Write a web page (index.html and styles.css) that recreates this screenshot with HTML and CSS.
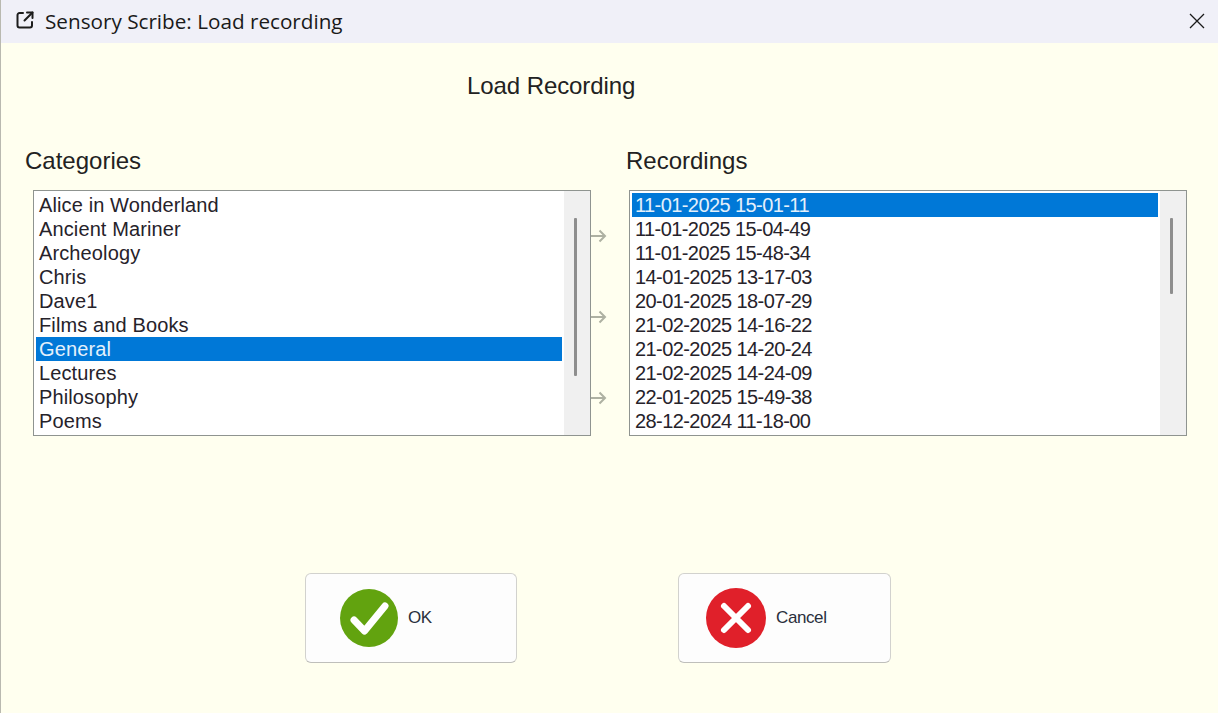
FILE: index.html
```html
<!DOCTYPE html>
<html lang="en">
<head>
<meta charset="utf-8">
<title>Sensory Scribe: Load recording</title>
<link rel="stylesheet" href="styles.css">
</head>
<body>
<div class="window">
  <header class="titlebar">
    <svg class="title-icon" width="18" height="18" viewBox="0 0 18 18" fill="none" stroke="#1c1c1c" stroke-width="2" stroke-linecap="round" stroke-linejoin="round">
      <path d="M7 2H3.500A2 2 0 0 0 1.500 4v10.500a2 2 0 0 0 2 2H14a2 2 0 0 0 2-2V11"/>
      <path d="M11 1.500h5.500V7"/>
      <path d="M16.500 1.500L8.500 9.500"/>
    </svg>
    <span class="title-text">Sensory Scribe: Load recording</span>
    <svg class="close-icon" width="16" height="16" viewBox="0 0 16 16" fill="none" stroke="#1a1a1a" stroke-width="1.300">
      <path d="M1 1L15 15M15 1L1 15"/>
    </svg>
  </header>
  <main class="content">
    <h1 class="heading">Load Recording</h1>
    <div class="labels">
      <div class="label label-left">Categories</div>
      <div class="label">Recordings</div>
    </div>
    <div class="lists">
      <div class="listbox">
        <ul class="items">
          <li>Alice in Wonderland</li>
          <li>Ancient Mariner</li>
          <li>Archeology</li>
          <li>Chris</li>
          <li>Dave1</li>
          <li>Films and Books</li>
          <li class="selected">General</li>
          <li>Lectures</li>
          <li>Philosophy</li>
          <li>Poems</li>
        </ul>
        <div class="track"><div class="thumb thumb-long"></div></div>
      </div>
      <div class="arrows">
        <svg width="16" height="14" viewBox="0 0 16 14" fill="none" stroke="#aeb1a2" stroke-width="2"><path d="M0 7H14M8.500 1.500L14 7L8.500 12.500"/></svg>
        <svg width="16" height="14" viewBox="0 0 16 14" fill="none" stroke="#aeb1a2" stroke-width="2"><path d="M0 7H14M8.500 1.500L14 7L8.500 12.500"/></svg>
        <svg width="16" height="14" viewBox="0 0 16 14" fill="none" stroke="#aeb1a2" stroke-width="2"><path d="M0 7H14M8.500 1.500L14 7L8.500 12.500"/></svg>
      </div>
      <div class="listbox">
        <ul class="items items-right">
          <li class="selected">11-01-2025 15-01-11</li>
          <li>11-01-2025 15-04-49</li>
          <li>11-01-2025 15-48-34</li>
          <li>14-01-2025 13-17-03</li>
          <li>20-01-2025 18-07-29</li>
          <li>21-02-2025 14-16-22</li>
          <li>21-02-2025 14-20-24</li>
          <li>21-02-2025 14-24-09</li>
          <li>22-01-2025 15-49-38</li>
          <li>28-12-2024 11-18-00</li>
        </ul>
        <div class="track"><div class="thumb thumb-short"></div></div>
      </div>
    </div>
    <div class="buttons">
      <button class="btn btn-ok" type="button">
        <svg width="58" height="58" viewBox="0 0 58 58"><circle cx="29" cy="29" r="29" fill="#62a30f"/><path d="M14 31L24.500 42L45 17" fill="none" stroke="#fff" stroke-width="7" stroke-linejoin="round" stroke-linecap="round"/></svg>
        <span>OK</span>
      </button>
      <button class="btn btn-cancel" type="button">
        <svg width="60" height="60" viewBox="0 0 60 60"><circle cx="30" cy="30" r="30" fill="#e0202a"/><path d="M18 18L42 42M42 18L18 42" fill="none" stroke="#fff" stroke-width="6" stroke-linecap="round"/></svg>
        <span>Cancel</span>
      </button>
    </div>
  </main>
</div>
</body>
</html>
```

FILE: styles.css
```css
* { box-sizing: border-box; }
html, body { margin: 0; padding: 0; height: 100%; overflow: hidden; }
body { font-family: "Liberation Sans", Arial, sans-serif; color: #1c1c1c; background: #ffffef; }

.window { width: 1218px; height: 713px; display: flex; flex-direction: column; background: #ffffef; border-left: 1px solid #b9b9b0; }

.titlebar { height: 43px; flex: none; display: flex; align-items: center; padding: 0 13px 0 15px; background: #f0f0f8; }
.title-icon { flex: none; margin-top: -3px; }
.title-text { margin-left: 11px; font-family: "Open Sans", "Noto Sans", sans-serif; font-size: 20.700px; color: #1a1a1a; flex: 1; margin-top: -1px; }
.close-icon { flex: none; margin-top: -2px; }

.content { flex: 1; display: flex; flex-direction: column; }

.heading { margin: 28px 0 0 466px; font-size: 24px; line-height: 30px; font-weight: 400; color: #222; letter-spacing: -0.080px; }

.labels { display: flex; margin-top: 45px; padding-left: 24px; }
.label { font-size: 24px; line-height: 30px; color: #222; }
.label-left { width: 601px; }

.lists { display: flex; margin-top: 14px; padding-left: 32px; }
.listbox { width: 558px; height: 246px; flex: none; display: flex; border: 1px solid #8f9490; background: #fff; }
.items { list-style: none; margin: 0; padding: 2px 2px 0; width: 530px; flex: none; }
.items li { height: 24px; line-height: 25px; font-size: 20px; padding-left: 3px; color: #26222a; white-space: nowrap; overflow: hidden; letter-spacing: 0.120px; }
.items-right li { letter-spacing: -0.580px; }
.items li.selected { background: #0078d7; color: #e4f0fb; }
.track { flex: 1; display: flex; justify-content: center; padding-right: 3px; background: #f0f0f0; }
.thumb { width: 3px; background: #8e8e8e; margin-top: 27px; border-radius: 1px; }
.thumb-long { height: 158px; }
.thumb-short { height: 76px; }

.arrows { width: 38px; flex: none; display: flex; flex-direction: column; gap: 67px; padding-top: 39px; }

.buttons { display: flex; gap: 161px; margin-top: 137px; padding-left: 304px; }
.btn { width: 213px; height: 90px; padding: 0; display: flex; align-items: center; background: #fdfdfd; border: 1px solid #d2d2ce; border-bottom-color: #bfbfbb; border-radius: 6px; font-family: "Liberation Sans", Arial, sans-serif; font-size: 17px; letter-spacing: -0.400px; color: #2a2f3c; }
.btn-ok { width: 212px; }
.btn-ok svg { margin-left: 34px; }
.btn-ok span { margin-left: 10px; }
.btn-cancel svg { margin-left: 27px; }
.btn-cancel span { margin-left: 10px; }
```
